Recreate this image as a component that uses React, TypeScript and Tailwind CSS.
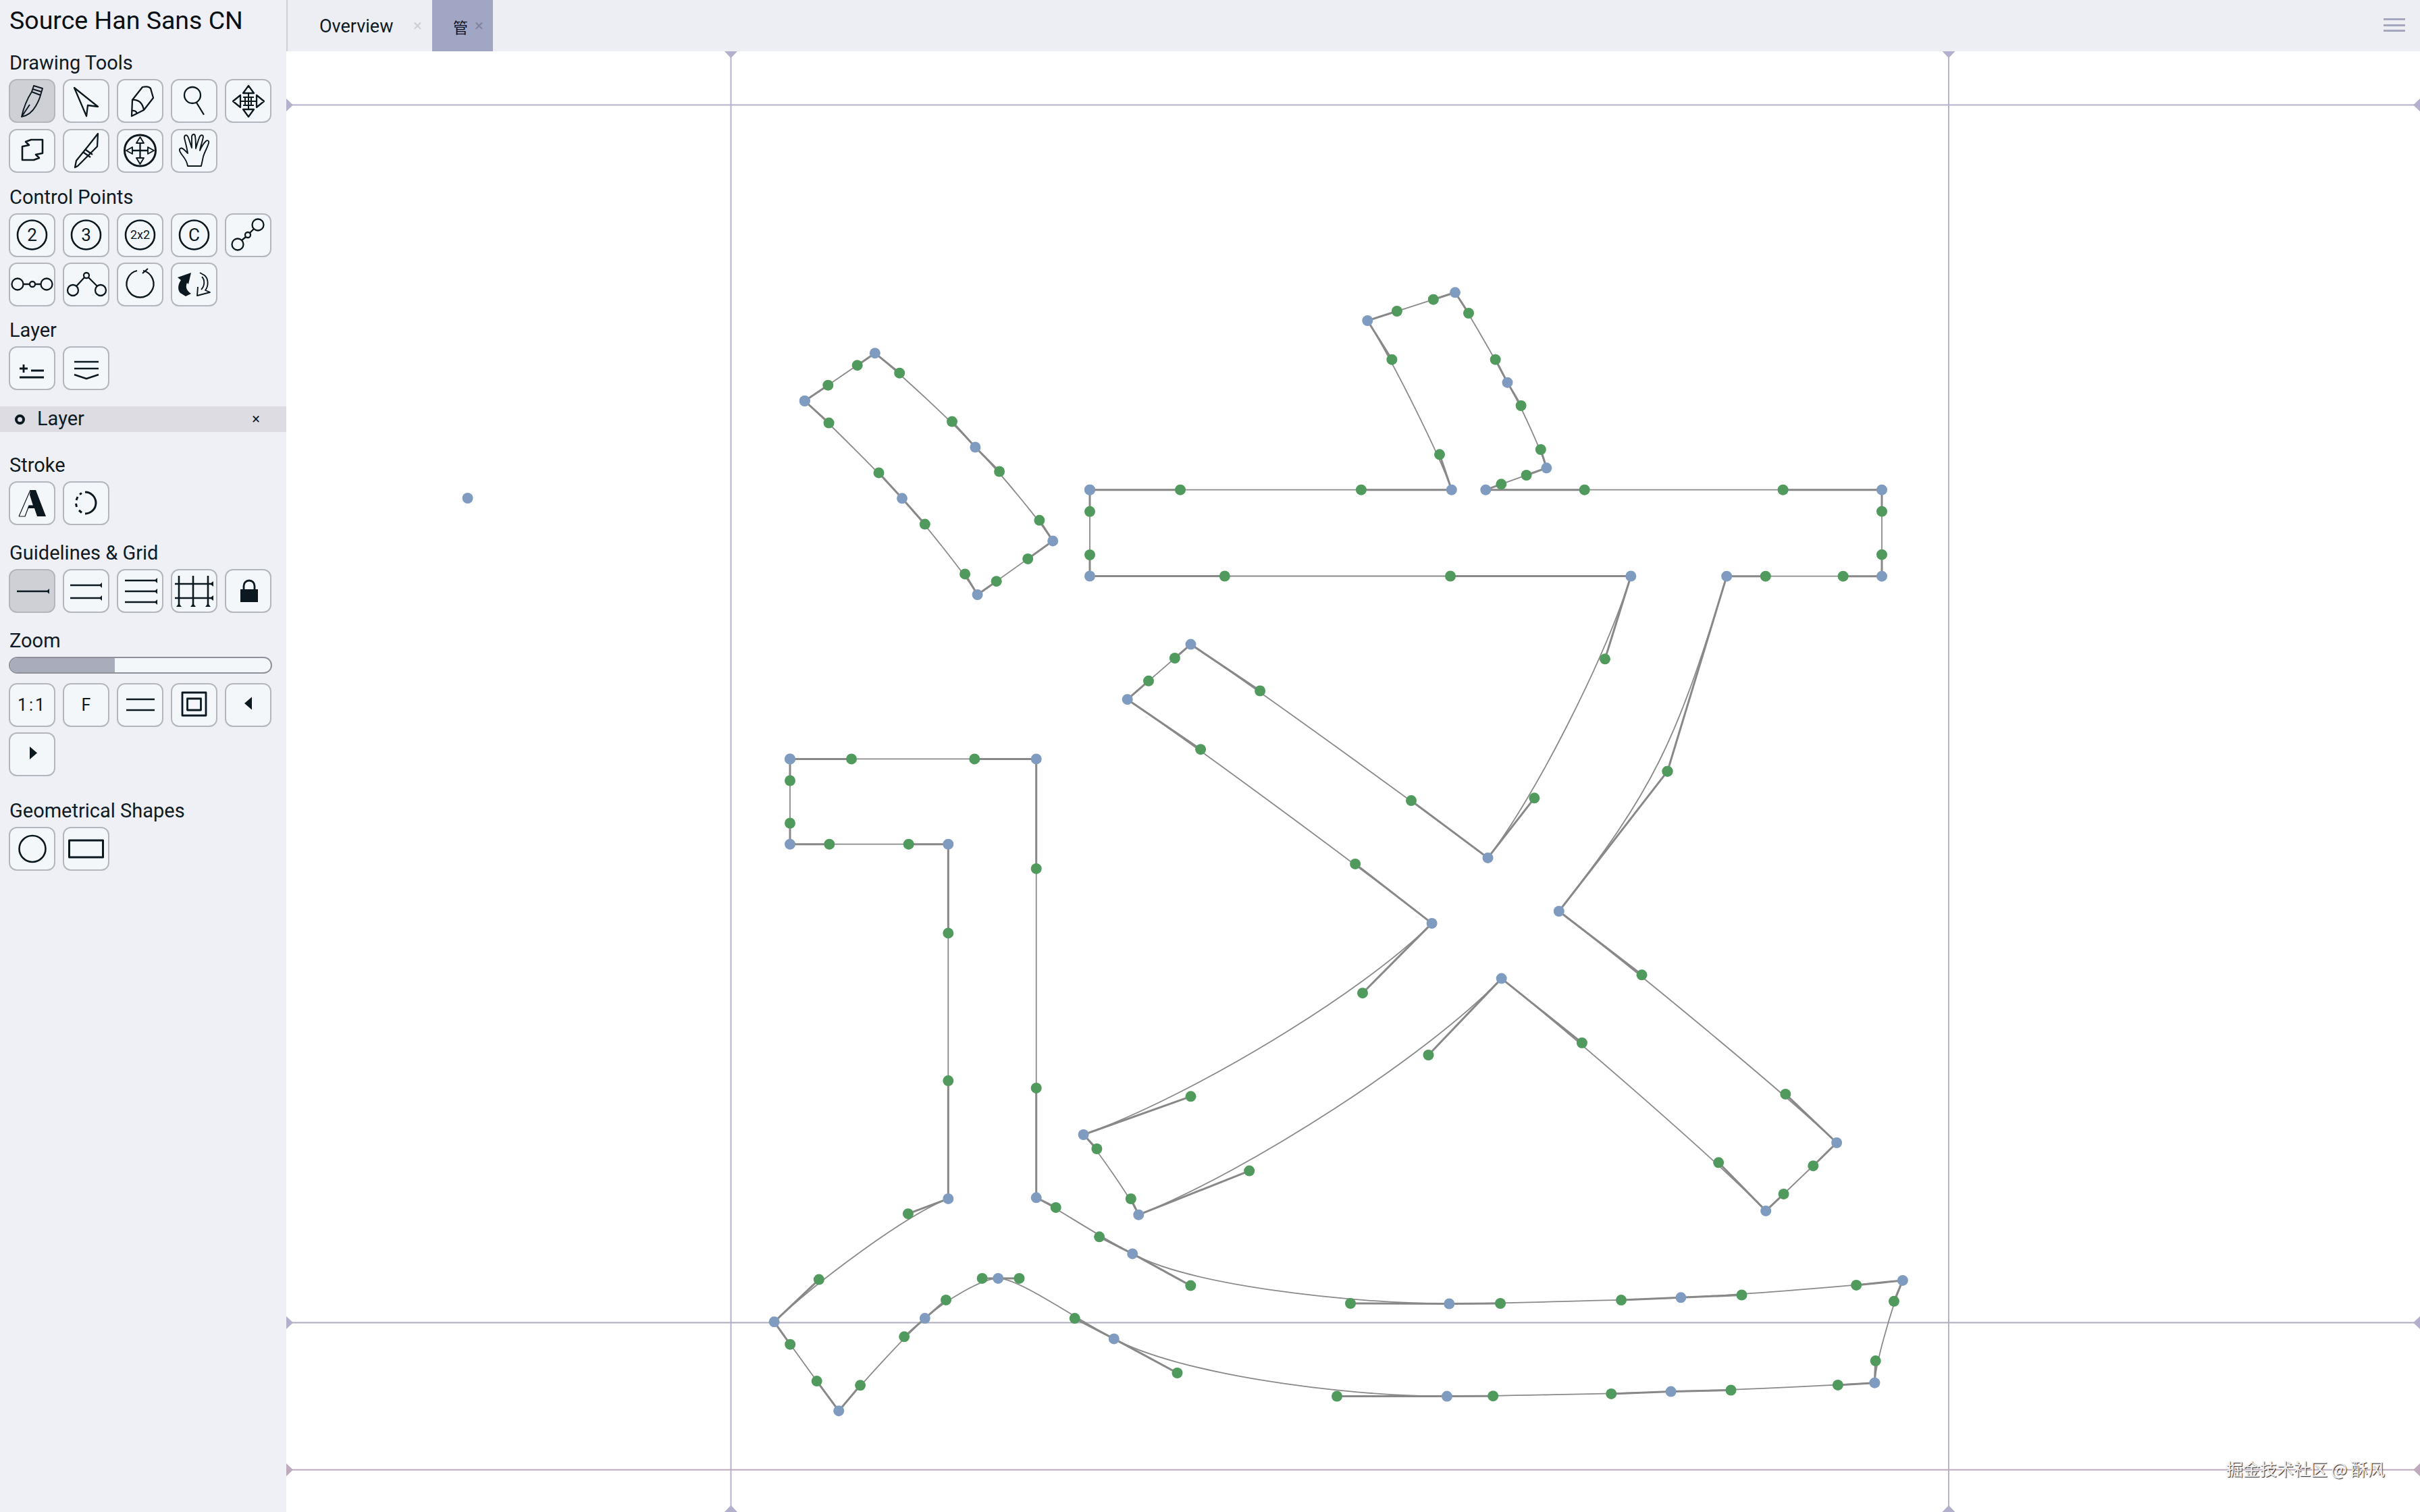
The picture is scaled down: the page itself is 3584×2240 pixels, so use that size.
import React from "react";

type P = [number, number];
type Seg = [P, P, P, P?, P?];
type Contour = { start: P; segs: Seg[] };

const contours: Contour[] = [
  {
    start: [1191.8, 594],
    segs: [
      [[1226.3, 570.7], [1269.7, 541.2], [1295.8, 523.2]],
      [[1332.2, 552.7], [1410, 624.6], [1444.4, 662.5]],
      [[1480.1, 698.5], [1539.4, 770.8], [1559.2, 801.4]],
      [[1522.2, 827.9], [1475.7, 861.2], [1447.6, 881]],
      [[1429.1, 850.4], [1369.8, 776.6], [1336, 738.3]],
      [[1301.5, 700.4], [1227.6, 626.6], [1191.8, 594]],
    ],
  },
  {
    start: [1614, 725.7],
    segs: [
      [[1748, 725.7], [2015.9, 725.7], [2149.8, 725.7]],
      [[2132, 673.3], [2061.4, 532.7], [2025.3, 475]],
      [[2068.9, 461], [2122.8, 443.7], [2155, 433.3]],
      [[2175, 464], [2214.7, 532.7], [2232.5, 566.7]],
      [[2252.6, 601], [2281.8, 666], [2290.4, 693.3]],
      [[2260.6, 704], [2223.3, 717.3], [2200.3, 725.7]],
      [[2346.7, 725.7], [2640.6, 725.7], [2787, 725.7]],
      [[2787, 757.7], [2787, 821.7], [2787, 853.7]],
      [[2729.6, 853.7], [2614.8, 853.7], [2557.2, 853.7]],
      [[2469.5, 1142.7], [2469.5, 1142.7], [2308.8, 1350], [2480.9, 1105.1], [2448.6, 1169.6]],
      [[2431.5, 1444.3], [2644.3, 1620.9], [2720.1, 1693]],
      [[2685.3, 1727.2], [2641.6, 1768.9], [2615.2, 1793.9]],
      [[2545.2, 1722.3], [2342.9, 1545], [2223.7, 1449.6]],
      [[2115.5, 1563], [1850.2, 1734.6], [1686.3, 1799.7]],
      [[1674.8, 1776], [1624.4, 1702], [1604.6, 1681]],
      [[1763.5, 1624.3], [2018, 1471.2], [2120.6, 1367.9]],
      [[2007.1, 1279.9], [1778.1, 1110.2], [1669.7, 1036.2]],
      [[1701, 1008.8], [1739.9, 975], [1763.5, 954.6]],
      [[1866.1, 1023.5], [2090, 1186.1], [2203.5, 1270.9]],
      [[2272.4, 1182.3], [2377, 976.3], [2415.3, 853.5]],
      [[2148, 853.5], [1813.8, 853.5], [1614, 853.5]],
      [[1614, 822], [1614, 757.8], [1614, 725.7]],
    ],
  },
  {
    start: [1170, 1124.4],
    segs: [
      [[1261, 1124.4], [1443.3, 1124.4], [1534.7, 1124.4]],
      [[1534.7, 1286.9], [1534.7, 1611.9], [1534.7, 1774.3]],
      [[1563.7, 1788.9], [1628.1, 1832.3], [1677.2, 1857.4]],
      [[1763.3, 1904.6], [2000, 1931], [2146.3, 1931.5]],
      [[2222, 1931], [2401, 1926.1], [2489.4, 1922.3]],
      [[2579.5, 1918.5], [2749.2, 1903.9], [2817.9, 1896.9]],
      [[2805, 1927.8], [2777.7, 2016.1], [2776.4, 2048.7]],
      [[2721.9, 2051.9], [2563.5, 2059.5], [2474.6, 2061.6]],
      [[2386.2, 2064.9], [2211.2, 2068.2], [2142.9, 2068.6]],
      [[1980, 2068.5], [1743.5, 2034], [1649.8, 1983.4]],
      [[1591.7, 1953.1], [1509.5, 1893.9], [1478.2, 1893.9]],
      [[1454.6, 1893.9], [1401, 1925.9], [1369.8, 1953.1]],
      [[1339.2, 1980.3], [1274.1, 2052.3], [1242.2, 2090.2]],
      [[1209.7, 2046.1], [1170.2, 1991.7], [1146.6, 1958.3]],
      [[1212.9, 1895.6], [1344.9, 1798.2], [1404.3, 1775.9]],
      [[1404.3, 1601.1], [1404.3, 1382.4], [1404.3, 1250.7]],
      [[1345.7, 1250.7], [1228.3, 1250.7], [1170, 1250.7]],
      [[1170, 1219.5], [1170, 1156.5], [1170, 1124.4]],
    ],
  },
];

const INK = "#0b1820";

function Glyph() {
  const lines: { a: P; b: P }[] = [];
  const greens: P[] = [];
  const blues: P[] = [[692.6, 738]];
  const paths = contours.map((c) => {
    let prev = c.start;
    let d = `M${c.start[0]} ${c.start[1]}`;
    blues.push(c.start);
    c.segs.forEach(([h1, h2, on, c1, c2]) => {
      const a = c1 ?? h1;
      const b = c2 ?? h2;
      d += ` C${a[0]} ${a[1]} ${b[0]} ${b[1]} ${on[0]} ${on[1]}`;
      lines.push({ a: prev, b: h1 }, { a: h2, b: on });
      greens.push(h1, h2);
      blues.push(on);
      prev = on;
    });
    return d;
  });
  return (
    <g>
      {paths.map((d, i) => (
        <path key={i} d={d} fill="none" stroke="#8a8a8a" strokeWidth={1.8} />
      ))}
      {lines.map((l, i) => (
        <line key={i} x1={l.a[0]} y1={l.a[1]} x2={l.b[0]} y2={l.b[1]} stroke="#888888" strokeWidth={3} />
      ))}
      {greens.map((p, i) => (
        <circle key={i} cx={p[0]} cy={p[1]} r={8} fill="#4f9a5c" />
      ))}
      {blues.map((p, i) => (
        <circle key={i} cx={p[0]} cy={p[1]} r={8} fill="#7f9bc0" />
      ))}
    </g>
  );
}

function Guides() {
  const v = "#b4b5cc";
  return (
    <g>
      <line x1={1082.5} y1={76} x2={1082.5} y2={2240} stroke={v} strokeWidth={2} />
      <line x1={2886} y1={76} x2={2886} y2={2240} stroke={v} strokeWidth={2} />
      <line x1={424} y1={155.5} x2={3584} y2={155.5} stroke="#b5b1cd" strokeWidth={2.2} />
      <line x1={424} y1={1959.5} x2={3584} y2={1959.5} stroke="#adacbb" strokeWidth={2} />
      <line x1={424} y1={2177.5} x2={3584} y2={2177.5} stroke="#bda9bb" strokeWidth={2} />
      <path d="M424 146 L434 155.5 L424 165 Z M3584 146 L3574 155.5 L3584 165 Z" fill="#b3b0cd" />
      <path d="M424 1950 L434 1959.5 L424 1969 Z M3584 1950 L3574 1959.5 L3584 1969 Z" fill="#b3b0cd" />
      <path d="M424 2168 L434 2177.5 L424 2187 Z M3584 2168 L3574 2177.5 L3584 2187 Z" fill="#c0aabd" />
      <path d="M1073 76 L1082.5 86 L1092 76 Z M2876.5 76 L2886 86 L2895.5 76 Z" fill="#b3b0cd" />
      <path d="M1073 2240 L1082.5 2230 L1092 2240 Z M2876.5 2240 L2886 2230 L2895.5 2240 Z" fill="#b3b0cd" />
    </g>
  );
}

function Btn({ active, children }: { active?: boolean; children: React.ReactNode }) {
  return (
    <div
      className={`w-[69px] h-[65px] box-border rounded-[12px] border-2 border-[#b3b6bc] ${active ? "bg-[#cfd0d6]" : "bg-[#f4f7fa]"}`}
    >
      <svg
        viewBox="2 2 65 61"
        className="w-[65px] h-[61px] block"
        fill="none"
        stroke={INK}
        strokeWidth={2.3}
        strokeLinejoin="round"
      >
        {children}
      </svg>
    </div>
  );
}

function Label({ children }: { children: React.ReactNode }) {
  return <div className="h-[34px] mb-[7px] pl-[14px] text-[29px] leading-[34px] text-[#0e1a24]">{children}</div>;
}

function Grid({ children }: { children: React.ReactNode }) {
  return <div className="grid grid-cols-[repeat(5,69px)] gap-x-[11px] gap-y-[9px] pl-[13px]">{children}</div>;
}

function GridTight({ children }: { children: React.ReactNode }) {
  return <div className="grid grid-cols-[repeat(5,69px)] gap-x-[11px] gap-y-[8px] pl-[13px]">{children}</div>;
}

function Circled({ t, small }: { t: string; small?: boolean }) {
  return (
    <g>
      <circle cx={34.5} cy={32} r={21.5} strokeWidth={2.6} />
      <text
        x={34.5}
        y={small ? 38 : 41}
        textAnchor="middle"
        stroke="none"
        fill={INK}
        className={small ? "text-[18px] font-['Roboto']" : "text-[26px] font-['Roboto']"}
      >
        {t}
      </text>
    </g>
  );
}

function Arrowed({ ys, x1, x2 }: { ys: number[]; x1: number; x2: number }) {
  return (
    <g>
      {ys.map((y) => (
        <g key={y}>
          <line x1={x1} y1={y} x2={x2} y2={y} strokeWidth={2.4} />
          <path d={`M${x2 + 1} ${y - 4} V${y + 4} L${x2 - 3} ${y} Z`} fill={INK} stroke="none" />
        </g>
      ))}
    </g>
  );
}

export default function App() {
  return (
    <div className="w-[3584px] h-[2240px] flex overflow-hidden bg-white font-['Roboto','Noto_Sans_CJK_SC',sans-serif] text-[#0e1a24]">
      <aside className="w-[424px] h-full shrink-0 bg-[#eef0f5]">
        <div className="h-[76px] pl-[14px] pt-[6px] text-[37.5px] leading-[48px] text-[#0a0f14]">Source Han Sans CN</div>

        <Label>Drawing Tools</Label>
        <Grid>
          <Btn active>
            <path d="M37 10 L50 14 L47 24 L34 19 Z M35.5 15 L48.5 19" strokeWidth={1.9} />
            <path d="M34 19 C27 30 22 42 19 56 C30 54 36 47 40 40 C44 33 46 28 47 24 M19 56 L31 38" strokeWidth={1.9} />
          </Btn>
          <Btn>
            <path d="M17 13 L52 41 L37 39 L35 55 Z" />
          </Btn>
          <Btn>
            <path d="M23 31 L38 12 Q47 10 50 14 L54 28 L40 46 L22 55 Z" />
            <path d="M23 31 Q37 30 40 46 M22 47 Q29 46 30 52" />
          </Btn>
          <Btn>
            <circle cx={32} cy={24} r={12} />
            <line x1={38} y1={35} x2={49} y2={53} />
          </Btn>
          <Btn>
            <path d="M35 10 L43 21 H27 Z M35 56 L43 45 H27 Z M12 33 L23 24 V42 Z M58 33 L47 24 V42 Z" />
            <path d="M35 21 V45 M23 33 H47 M30 27 V39 M39 27 V39 M27 27 H43 M27 39 H43" strokeWidth={2} />
          </Btn>
          <Btn>
            <path d="M33 16 H50 V36 L40 38 L45 43 L37 46 H20 V26 L30 24 L25 19 Z" strokeWidth={2.6} />
          </Btn>
          <Btn>
            <path d="M18 57 L20 47 L37 26 L52 7 L51 26 L22 55 Z M34 31 L44 38 M31 35 L41 42" />
          </Btn>
          <Btn>
            <circle cx={34.5} cy={32} r={23} strokeWidth={3} />
            <path d="M34.5 12 L40 21 H29 Z M34.5 52 L40 43 H29 Z M14 32 L23 27 V37 Z M55 32 L46 27 V37 Z" strokeWidth={1.9} />
            <path d="M34.5 21 V43 M23 32 H46" />
          </Btn>
          <Btn>
            <path
              d="M25 55 C24 48 21 44 17 39 C15 36 12 33 13 30 C15 27 18 29 21 32 L25 36 C24 28 21 18 20 13 C20 9 23 8 25 11 C27 15 29 22 31 28 C31 20 31 14 31 11 C32 7 36 7 36 11 C37 16 37 23 37 29 C39 22 41 15 43 11 C45 8 48 9 48 12 C47 18 44 25 43 32 C45 27 49 21 52 18 C55 16 57 18 56 21 C54 28 50 34 48 41 C47 46 46 50 45 55 Z"
              strokeWidth={1.9}
            />
          </Btn>
        </Grid>

        <div className="h-[19px]" />
        <Label>Control Points</Label>
        <GridTight>
          <Btn>
            <Circled t="2" />
          </Btn>
          <Btn>
            <Circled t="3" />
          </Btn>
          <Btn>
            <Circled t="2x2" small />
          </Btn>
          <Btn>
            <Circled t="C" />
          </Btn>
          <Btn>
            <circle cx={49} cy={17} r={8.5} />
            <circle cx={34} cy={32} r={4} />
            <circle cx={19} cy={46} r={8.5} />
            <path d="M43 23 L37 29 M31 35 L25 40" />
          </Btn>
          <Btn>
            <circle cx={13} cy={32} r={8.5} />
            <circle cx={35} cy={32} r={4} />
            <circle cx={56} cy={32} r={8.5} />
            <path d="M21 32 H31 M39 32 H48" />
          </Btn>
          <Btn>
            <circle cx={15} cy={41} r={8} />
            <circle cx={35} cy={19} r={4} />
            <circle cx={56} cy={41} r={8} />
            <path d="M20 35 L32 22 M38 22 L51 35" />
          </Btn>
          <Btn>
            <path d="M39 12 A20 20 0 1 1 30 12" />
            <line x1={38} y1={16} x2={46} y2={9} />
          </Btn>
          <Btn>
            <path
              d="M30 15 L10 22 L15 26 C10 33 10 41 14 45 L22 50 L30 46 C24 42 21 37 24 30 L26 32 Z"
              fill={INK}
              stroke="none"
            />
            <path d="M40 36 L39 49 L58 44 L51 41 C56 35 56 24 50 19 L43 15 M45 40 C50 35 51 26 46 21" strokeWidth={1.9} />
          </Btn>
        </GridTight>

        <div className="h-[18px]" />
        <Label>Layer</Label>
        <Grid>
          <Btn>
            <path d="M16 33 H28 M22 27 V39 M33 36 H52 M16 46 H52" strokeWidth={2.8} />
          </Btn>
          <Btn>
            <path d="M17 23 H53 M17 33 H53 M17 42 L35 48 L53 42" strokeWidth={2.5} />
          </Btn>
        </Grid>

        <div className="mt-[24px] h-[38px] bg-[#dcdce2] flex items-center pl-[22px] pr-[39px]">
          <span className="w-[15px] h-[15px] rounded-full border-[4px] border-[#0b1820] box-border" />
          <span className="ml-[18px] flex-1 text-[29px] leading-[36px] h-[38px]">Layer</span>
          <span className="text-[22px] leading-[38px]">×</span>
        </div>

        <div className="h-[32px]" />
        <Label>Stroke</Label>
        <Grid>
          <Btn>
            <path d="M15 52 L32 13 M15 52 H24 L30 36 H36" strokeWidth={1.2} />
            <path d="M32 13 H40 L55 52 H42 L38 40 H28 L30 36 H36 L31 20 Z" fill={INK} stroke="none" />
          </Btn>
          <Btn>
            <path d="M33 16 A16 16 0 0 1 33 48" strokeWidth={3} />
            <path d="M28 46.5 L24 43 M20.5 38 L19.5 33 M20 28 L22 23 M25 19.5 L28 17.5" strokeWidth={3} />
          </Btn>
        </Grid>

        <div className="h-[24px]" />
        <Label>Guidelines &amp; Grid</Label>
        <Grid>
          <Btn active>
            <Arrowed ys={[33]} x1={12} x2={59} />
          </Btn>
          <Btn>
            <Arrowed ys={[24, 43]} x1={11} x2={57} />
          </Btn>
          <Btn>
            <Arrowed ys={[17, 33, 49]} x1={12} x2={59} />
          </Btn>
          <Btn>
            <path d="M12 10 V55 M33 10 V55 M55 10 V55 M6 22 H63 M6 43 H63" strokeWidth={2.6} />
            <path d="M63 18 V26 L58 22 Z M63 39 V47 L58 43 Z M8 56 H16 L12 51 Z M29 56 H37 L33 51 Z M51 56 H59 L55 51 Z" fill={INK} stroke="none" />
          </Btn>
          <Btn>
            <path d="M28 30 V25 A8 8 0 0 1 44 25 V30" strokeWidth={2.8} />
            <rect x={23} y={30} width={26} height={19} fill={INK} stroke="none" />
          </Btn>
        </Grid>

        <div className="h-[24px]" />
        <div className="h-[34px] mb-[7px] pl-[14px] text-[29px] leading-[34px]">Zoom</div>
        <div className="ml-[13px] w-[390px] h-[25px] box-border rounded-full border-2 border-[#8f909c] bg-[#f4f7fa] overflow-hidden">
          <div className="w-[155px] h-full bg-[#a9acba]" />
        </div>
        <div className="h-[14px]" />
        <GridTight>
          <Btn>
            <text x={34.5} y={41} textAnchor="middle" stroke="none" fill={INK} className="text-[25px] tracking-[3px] font-['Roboto']">
              1:1
            </text>
          </Btn>
          <Btn>
            <text x={34.5} y={41} textAnchor="middle" stroke="none" fill={INK} className="text-[25px] font-['Roboto']">
              F
            </text>
          </Btn>
          <Btn>
            <path d="M14 24 H56 M14 40 H56" />
          </Btn>
          <Btn>
            <rect x={17} y={14} width={35} height={34} strokeWidth={2.8} />
            <rect x={24.5} y={23} width={20} height={17} strokeWidth={2.8} />
          </Btn>
          <Btn>
            <path d="M29 30 L40 20.5 V39.5 Z" fill={INK} stroke="none" />
          </Btn>
          <Btn>
            <path d="M31 21 L42 30.5 L31 40 Z" fill={INK} stroke="none" />
          </Btn>
        </GridTight>

        <div className="h-[34px]" />
        <Label>Geometrical Shapes</Label>
        <Grid>
          <Btn>
            <circle cx={35} cy={32.5} r={19.5} strokeWidth={2.6} />
          </Btn>
          <Btn>
            <rect x={9.5} y={20} width={50} height={25} strokeWidth={3} />
          </Btn>
        </Grid>
      </aside>

      <main className="flex-1 flex flex-col min-w-0">
        <header className="h-[76px] shrink-0 bg-[#eceef3] border-l-2 border-[#d0d1d8] flex items-stretch">
          <div className="w-[214px] flex items-center pt-[2px] relative">
            <span className="ml-[47px] text-[27px] text-[#0e1a24]">Overview</span>
            <span className="absolute left-[186px] top-[20px] text-[24px] leading-[36px] text-[#ccced6]">×</span>
          </div>
          <div className="w-[90px] bg-[#a1a6c4] flex items-center pt-[2px] relative">
            <span className="ml-[31px] text-[22px] font-['Noto_Sans_CJK_SC',sans-serif] text-[#0e1020]">管</span>
            <span className="absolute left-[63px] top-[20px] text-[24px] leading-[36px] text-[#80849f]">×</span>
          </div>
          <div className="flex-1" />
          <div className="w-[54px] pt-[27px]">
            <div className="w-[32px] h-[3px] bg-[#a5a6c0] mb-[5.5px]" />
            <div className="w-[32px] h-[3px] bg-[#a5a6c0] mb-[5.5px]" />
            <div className="w-[32px] h-[3px] bg-[#a5a6c0]" />
          </div>
        </header>
        <div className="flex-1 relative bg-white">
          <svg viewBox="424 76 3160 2164" className="absolute inset-0 w-full h-full">
            <Guides />
            <Glyph />
          </svg>
          <div className="absolute left-[2873px] top-[2083px] text-[25px] leading-[32px] whitespace-nowrap font-['Noto_Sans_CJK_SC','Roboto',sans-serif] text-[#f0f0f0] [text-shadow:1px_1px_1px_#222]">
            掘金技术社区 @ 酥风
          </div>
        </div>
      </main>
    </div>
  );
}
